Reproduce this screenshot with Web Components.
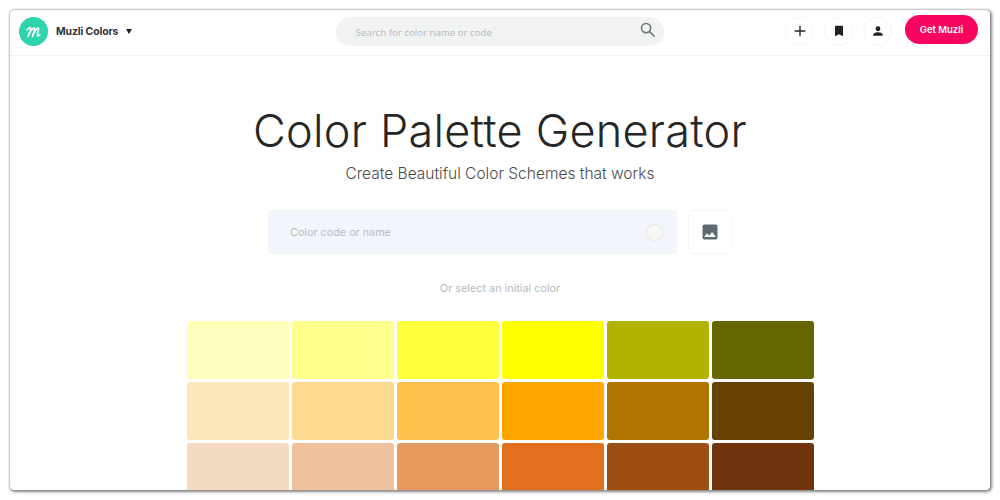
<!DOCTYPE html>
<html>
<head>
<meta charset="utf-8">
<title>Muzli Colors</title>
<style>
  html, body { margin: 0; background: #fff; }
  body { padding: 10px; height: 500px; box-sizing: border-box; font-family: "Inter", "Liberation Sans", sans-serif; }
  muzli-app { height: 480px; }
</style>
</head>
<body>
<muzli-app>
  <muzli-header></muzli-header>
  <muzli-hero></muzli-hero>
  <color-grid></color-grid>
</muzli-app>

<script>
const swatches = [
  ['#ffffbb', '#ffff8d', '#ffff3b', '#ffff00', '#b2b200', '#666600'],
  ['#fde5bc', '#fdd890', '#ffc04d', '#ffa500', '#b27300', '#664200'],
  ['#f4d9c3', '#f0c19e', '#e69a5f', '#e0701e', '#9c4e12', '#70350e'],
];

class MuzliApp extends HTMLElement {
  constructor() {
    super();
    const shadow = this.attachShadow({mode: 'open'});
    shadow.innerHTML = `
      <style>
        :host {
          display: block;
          background: #fff;
          border-radius: 4px;
          overflow: hidden;
          box-shadow: 0 0 1px #666, 1px 1px 3px 1px #0000007a;
        }
      </style>
      <slot></slot>
    `;
  }
}

class MuzliHeader extends HTMLElement {
  constructor() {
    super();
    const shadow = this.attachShadow({mode: 'open'});
    shadow.innerHTML = `
      <style>
        :host {
          display: grid;
          grid-template-columns: 1fr 328px 1fr;
          align-items: center;
          height: 45px;
          padding: 0 12px 0 9px;
          border-bottom: 1px solid #f1f1f1;
          color: #333;
        }
        .brand { display: flex; align-items: center; margin-top: -3px; }
        .logo { width: 29px; height: 29px; display: block; }
        .name { font-size: 10.4px; font-weight: 700; margin-left: 8px; letter-spacing: -.1px; white-space: nowrap; }
        .caret { width: 0; height: 0; margin-left: 8px; border: 3.5px solid transparent; border-top: 5px solid #222; border-bottom: 0; }
        .search {
          height: 29px; margin: -3px 0 0 1px; width: 328px; border-radius: 15px; background: #f1f3f3;
          display: flex; align-items: center; justify-content: space-between;
          padding: 0 8px 0 20px; box-sizing: border-box;
          color: #b5b8b9; font: 9.7px "Open Sans", sans-serif;
        }
        .search span { margin-top: 2px; }
        .search svg { width: 17px; height: 17px; margin-top: -3px; }
        .actions { display: flex; justify-content: flex-end; align-items: center; margin-top: -3px; }
        .round {
          width: 29px; height: 29px; box-sizing: border-box; margin-right: 10px;
          border: 1px solid #f5f5f5; border-radius: 50%;
          display: flex; align-items: center; justify-content: center;
        }
        .round svg { width: 16px; height: 16px; }
        .get {
          width: 73px; height: 29px; margin-left: 3px; margin-top: -3px; border-radius: 15px;
          background: #f7055f; color: #fff;
          font-size: 9.5px; font-weight: 600;
          display: flex; align-items: center; justify-content: center;
        }
      </style>
      <div class="brand">
        <svg class="logo" viewBox="0 0 29 29">
          <circle cx="14.500" cy="14.500" r="14.500" fill="#2fd3ad"/>
          <path d="M8 13c1.200-2 3-3 3.600-2 .6 1-1.800 6-2.700 8.500 1.800-4 4.700-8.500 6.200-8.500 1.300 0-.9 5.500-1.700 8.500 1.500-4 4.300-8.500 5.900-8.500 1.300 0-1.100 5.500-1 7.300.1 1.200 1.400.7 2.700-.8" fill="none" stroke="#fff" stroke-width="1.500" stroke-linecap="round" stroke-linejoin="round"/>
        </svg>
        <span class="name">Muzli Colors</span>
        <span class="caret"></span>
      </div>
      <div class="search">
        <span>Search for color name or code</span>
        <svg viewBox="0 0 24 24" fill="none" stroke="#6f7577" stroke-width="2.2"><circle cx="10" cy="10" r="6.5"/><path d="M15 15l6.5 6.5" stroke-linecap="round"/></svg>
      </div>
      <div class="actions">
        <span class="round"><svg viewBox="0 0 24 24" fill="#222"><path d="M11 4h2v7h7v2h-7v7h-2v-7H4v-2h7z"/></svg></span>
        <span class="round"><svg viewBox="0 0 24 24" fill="#222"><path d="M7 4h10a1 1 0 0 1 1 1v15l-6-3-6 3V5a1 1 0 0 1 1-1z"/></svg></span>
        <span class="round"><svg viewBox="0 0 24 24" fill="#222"><path d="M12 5a3.6 3.6 0 1 1 0 7.200A3.6 3.6 0 0 1 12 5zM5 19v-1.600c0-2.400 4.600-3.600 7-3.600s7 1.200 7 3.600V19z"/></svg></span>
        <span class="get">Get Muzli</span>
      </div>
    `;
  }
}

class MuzliHero extends HTMLElement {
  constructor() {
    super();
    const shadow = this.attachShadow({mode: 'open'});
    shadow.innerHTML = `
      <style>
        :host { display: flex; flex-direction: column; align-items: center; padding-top: 47px; }
        h1 {
          margin: 0; font-size: 45px; line-height: 56px; font-weight: 300; color: #262626;
          white-space: nowrap; letter-spacing: .25px;
        }
        p { margin: 3px 0 0; font-size: 15.5px; line-height: 24px; font-weight: 300; color: #4a4a4a; }
        .row { display: flex; gap: 11px; margin-top: 24px; }
        .input {
          width: 409px; height: 44px; box-sizing: border-box; border-radius: 3px;
          background: #f2f5fb; color: #b9bdc2; font-size: 10.8px;
          display: flex; align-items: center; justify-content: space-between;
          padding: 0 15px 0 22px;
        }
        .dot { width: 15px; height: 15px; border-radius: 50%; background: #f8f7f2; box-shadow: 0 0 3px #00000024; }
        .upload {
          width: 44px; height: 44px; box-sizing: border-box; border: 1px solid #f6f6f6; border-radius: 3px;
          display: flex; align-items: center; justify-content: center;
        }
        .upload svg { width: 20px; height: 20px; }
        .hint { margin-top: 27px; font-size: 10.85px; line-height: 14px; color: #b3bcbc; }
      </style>
      <h1>Color Palette Generator</h1>
      <p>Create Beautiful Color Schemes that works</p>
      <div class="row">
        <div class="input"><span>Color code or name</span><span class="dot"></span></div>
        <div class="upload"><svg viewBox="0 0 24 24" fill="#5f6b73"><path d="M21 19V5a2 2 0 0 0-2-2H5a2 2 0 0 0-2 2v14a2 2 0 0 0 2 2h14a2 2 0 0 0 2-2zM8.500 13.500l2.500 3 3.500-4.500 4.500 6H5z"/></svg></div>
      </div>
      <div class="hint">Or select an initial color</div>
    `;
  }
}

class ColorGrid extends HTMLElement {
  constructor() {
    super();
    const shadow = this.attachShadow({mode: 'open'});
    const cells = swatches.flat().map(c => `<color-swatch style="--swatch:${c}"></color-swatch>`).join('');
    shadow.innerHTML = `
      <style>
        :host {
          display: grid;
          grid-template-columns: repeat(6, 102px);
          grid-auto-rows: 58px;
          gap: 3px;
          justify-content: center;
          margin-top: 26px;
        }
      </style>
      ${cells}
    `;
  }
}

class ColorSwatch extends HTMLElement {
  constructor() {
    super();
    const shadow = this.attachShadow({mode: 'open'});
    shadow.innerHTML = `
      <style>
        :host { display: block; background: var(--swatch); border-radius: 3px; }
      </style>
    `;
  }
}

customElements.define('muzli-app', MuzliApp);
customElements.define('muzli-header', MuzliHeader);
customElements.define('muzli-hero', MuzliHero);
customElements.define('color-grid', ColorGrid);
customElements.define('color-swatch', ColorSwatch);
</script>
</body>
</html>
